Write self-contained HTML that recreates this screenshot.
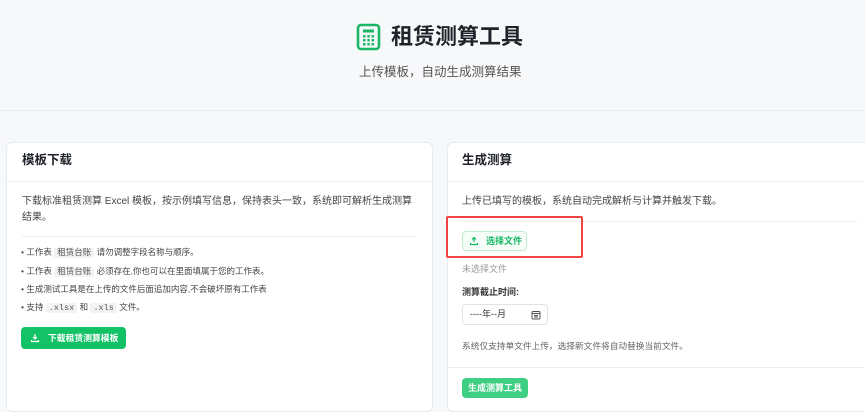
<!DOCTYPE html><html><head><meta charset="utf-8"><style>
*{margin:0;padding:0;box-sizing:border-box}
body{width:865px;height:400px;overflow:hidden;background:#f7f8fa;font-family:"Liberation Sans","Noto Sans CJK SC",sans-serif;position:relative;color:#333}
.a{position:absolute;white-space:nowrap}
.card{position:absolute;background:#fff;border:1px solid #e8ebef;border-radius:6px}
.code{background:#f1f3f5;padding:0 3px;border-radius:2px;font-family:"Liberation Mono","Noto Sans CJK SC",monospace;font-size:8.5px;color:#555}
</style></head><body>
<div class="a" style="left:0;top:110px;width:865px;border-top:1px solid #e6e9ee"></div>
<svg class="a" style="left:356px;top:23px" width="25" height="28" viewBox="0 0 25 28"><rect x="2" y="2" width="21" height="24" rx="3" fill="none" stroke="#19b765" stroke-width="2.6"/><rect x="7" y="6.5" width="11" height="3" fill="#19b765"/><g fill="#19b765"><rect x="7" y="12" width="2.5" height="2.5"/><rect x="11.3" y="12" width="2.5" height="2.5"/><rect x="15.5" y="12" width="2.5" height="2.5"/><rect x="7" y="16" width="2.5" height="2.5"/><rect x="11.3" y="16" width="2.5" height="2.5"/><rect x="15.5" y="16" width="2.5" height="2.5"/><rect x="7" y="20" width="2.5" height="2.5"/><rect x="11.3" y="20" width="2.5" height="2.5"/><rect x="15.5" y="20" width="2.5" height="2.5"/></g></svg>
<div class="a" style="left:391px;top:23px;font-size:22px;font-weight:bold;color:#1f2329;line-height:28px">租赁测算工具</div>
<div class="a" style="left:359px;top:63px;font-size:12.5px;color:#555;line-height:18px">上传模板，自动生成测算结果</div>

<div class="card" style="left:6px;top:142px;width:427px;height:270px">
<div style="height:39px;border-bottom:1px solid #eceef1"></div>
</div>
<div class="a" style="left:22px;top:151px;font-size:12.5px;font-weight:bold;color:#1f2329;line-height:18px">模板下载</div>
<div class="a" style="left:22px;top:194px;font-size:10px;color:#444;line-height:16px">下载标准租赁测算 Excel 模板，按示例填写信息，保持表头一致，系统即可解析生成测算<br>结果。</div>
<div class="a" style="left:22px;top:236px;width:395px;border-top:1px solid #eceef1"></div>
<div class="a" style="left:21px;top:244px;font-size:8.5px;color:#444;line-height:17.5px">• 工作表 <span class="code">租赁台账</span> 请勿调整字段名称与顺序。<br>• 工作表 <span class="code">租赁台账</span> 必须存在,你也可以在里面填属于您的工作表。<br>• 生成测试工具是在上传的文件后面追加内容,不会破坏原有工作表<br>• 支持 <span class="code">.xlsx</span> 和 <span class="code">.xls</span> 文件。</div>
<div class="a" style="left:21px;top:327px;width:105px;height:22px;background:#13c166;border-radius:4px;color:#fff;font-size:8.8px;font-weight:bold;line-height:22px;padding-left:27px">下载租赁测算模板
<svg style="position:absolute;left:9px;top:6px" width="10" height="10" viewBox="0 0 10 10" fill="none" stroke="#fff" stroke-width="1.2"><path d="M5 1v5M3 4l2 2 2-2M1.5 7v1.5h7V7"/></svg></div>

<div class="card" style="left:447px;top:142px;width:430px;height:270px">
<div style="height:39px;border-bottom:1px solid #eceef1"></div>
</div>
<div class="a" style="left:462px;top:151px;font-size:12.5px;font-weight:bold;color:#1f2329;line-height:18px">生成测算</div>
<div class="a" style="left:462px;top:194px;font-size:10px;color:#444;line-height:16px">上传已填写的模板，系统自动完成解析与计算并触发下载。</div>
<div class="a" style="left:462px;top:221px;width:396px;border-top:1px solid #eceef1"></div>
<div class="a" style="left:446px;top:216px;width:137px;height:42px;border:2px solid #ee4444;border-radius:2px"></div>
<div class="a" style="left:462px;top:231px;width:65px;height:20px;border:1px solid #bfeccf;border-radius:4px;background:#f6fdf9;color:#17b862;font-size:9px;font-weight:bold;line-height:18px;padding-left:23px">选择文件
<svg style="position:absolute;left:6px;top:4px" width="10" height="10" viewBox="0 0 10 10" fill="none" stroke="#17b862" stroke-width="1.2"><path d="M5 6V1.5M3 3.5l2-2 2 2M1.5 7v1.5h7V7"/></svg></div>
<div class="a" style="left:462px;top:262px;font-size:9px;color:#999;line-height:14px">未选择文件</div>
<div class="a" style="left:462px;top:285px;font-size:9px;font-weight:bold;color:#333;line-height:14px">测算截止时间:</div>
<div class="a" style="left:462px;top:304px;width:86px;height:21px;border:1px solid #dfe3e8;border-radius:4px;font-size:9px;line-height:19px;padding-left:7px;color:#333">----年--月
<svg style="position:absolute;left:68px;top:5px" width="10" height="10" viewBox="0 0 10 10" fill="none" stroke="#555" stroke-width="1"><rect x="1" y="1.5" width="8" height="7.5" rx="1"/><path d="M1 3.5h8M3 5.5h4M3 7h4"/></svg></div>
<div class="a" style="left:462px;top:339px;font-size:8.7px;color:#666;line-height:14px">系统仅支持单文件上传，选择新文件将自动替换当前文件。</div>
<div class="a" style="left:448px;top:367px;width:417px;border-top:1px solid #eceef1"></div>
<div class="a" style="left:462px;top:378px;width:66px;height:20px;background:#3fcf82;border-radius:4px;color:#fff;font-size:9px;font-weight:bold;line-height:20px;text-align:center">生成测算工具</div>
</body></html>
